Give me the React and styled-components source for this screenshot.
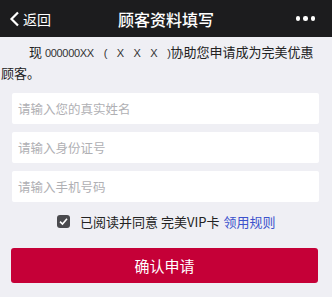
import React from 'react';
import styled, { createGlobalStyle } from 'styled-components';

const GlobalStyle = createGlobalStyle`
  html, body {
    margin: 0;
    padding: 0;
    background: #efeff4;
    font-family: "Noto Sans CJK SC", "Liberation Sans", sans-serif;
  }
`;

const Page = styled.div`
  width: 332px;
  height: 297px;
  background: #efeff4;
  overflow: hidden;
`;

const Header = styled.header`
  height: 37px;
  background: #1c1c1e;
  display: flex;
  align-items: center;
  color: #fff;
`;

const Back = styled.div`
  display: flex;
  align-items: center;
  gap: 3px;
  padding-left: 9px;
  font-size: 14px;
  width: 71px;
`;

const Title = styled.h1`
  flex: 1;
  margin: 0;
  text-align: center;
  font-size: 16px;
  font-weight: 500;
`;

const Dots = styled.div`
  width: 80px;
  display: flex;
  justify-content: flex-end;
  gap: 3px;
  padding-right: 17px;
  box-sizing: border-box;
`;

const Dot = styled.span`
  width: 4.5px;
  height: 4.5px;
  border-radius: 50%;
  background: #fff;
`;

const Intro = styled.p`
  margin: 0;
  padding: 5px 4px 0 1px;
  font-size: 13px;
  line-height: 20px;
  color: #222;
  text-indent: 28px;
  white-space: nowrap;
`;

const Latin = styled.span`
  font-family: "Liberation Sans", sans-serif;
  font-size: 11px;
  letter-spacing: -0.3px;
  word-spacing: 7px;
  color: #333;
`;

const Form = styled.div`
  display: flex;
  flex-direction: column;
  gap: 8px;
  padding: 10px 13px 0 12px;
`;

const Field = styled.div`
  height: 31px;
  background: #fff;
  border-radius: 2px;
  display: flex;
  align-items: center;
  padding-left: 6px;
  font-size: 12.5px;
  color: #b0b0b4;
`;

const Agree = styled.div`
  display: flex;
  align-items: center;
  gap: 10px;
  margin-top: 10px;
  padding-left: 57px;
  font-size: 13px;
  line-height: 19px;
  color: #222;
`;

const Box = styled.span`
  width: 13px;
  height: 13px;
  border-radius: 3px;
  background: #4a4a4e;
  display: flex;
  align-items: center;
  justify-content: center;
`;

const Link = styled.span`
  color: #3c52cc;
  margin-left: 4px;
`;

const Button = styled.button`
  display: block;
  margin: 17px 14px 0 11px;
  width: calc(100% - 25px);
  height: 35px;
  border: none;
  border-radius: 3px;
  background: #c50037;
  color: #fff;
  font-family: inherit;
  font-size: 15px;
`;

const App = () => {
  return (
    <Page>
      <GlobalStyle />
      <Header>
        <Back>
          <svg width="11" height="16" viewBox="0 0 11 16">
            <path d="M9 1.5 L2.5 8 L9 14.5" fill="none" stroke="#fff" strokeWidth="2.2" />
          </svg>
          返回
        </Back>
        <Title>顾客资料填写</Title>
        <Dots>
          <Dot />
          <Dot />
          <Dot />
        </Dots>
      </Header>
      <Intro>
        现 <Latin>000000XX ( X X X )</Latin>协助您申请成为完美优惠
        <br />
        顾客。
      </Intro>
      <Form>
        <Field>请输入您的真实姓名</Field>
        <Field>请输入身份证号</Field>
        <Field>请输入手机号码</Field>
      </Form>
      <Agree>
        <Box>
          <svg width="9" height="9" viewBox="0 0 9 9">
            <path d="M1 4.6 L3.5 7 L8 1.8" fill="none" stroke="#fff" strokeWidth="1.6" />
          </svg>
        </Box>
        <span>
          已阅读并同意 完美VIP卡<Link>领用规则</Link>
        </span>
      </Agree>
      <Button>确认申请</Button>
    </Page>
  );
};

export default App;
